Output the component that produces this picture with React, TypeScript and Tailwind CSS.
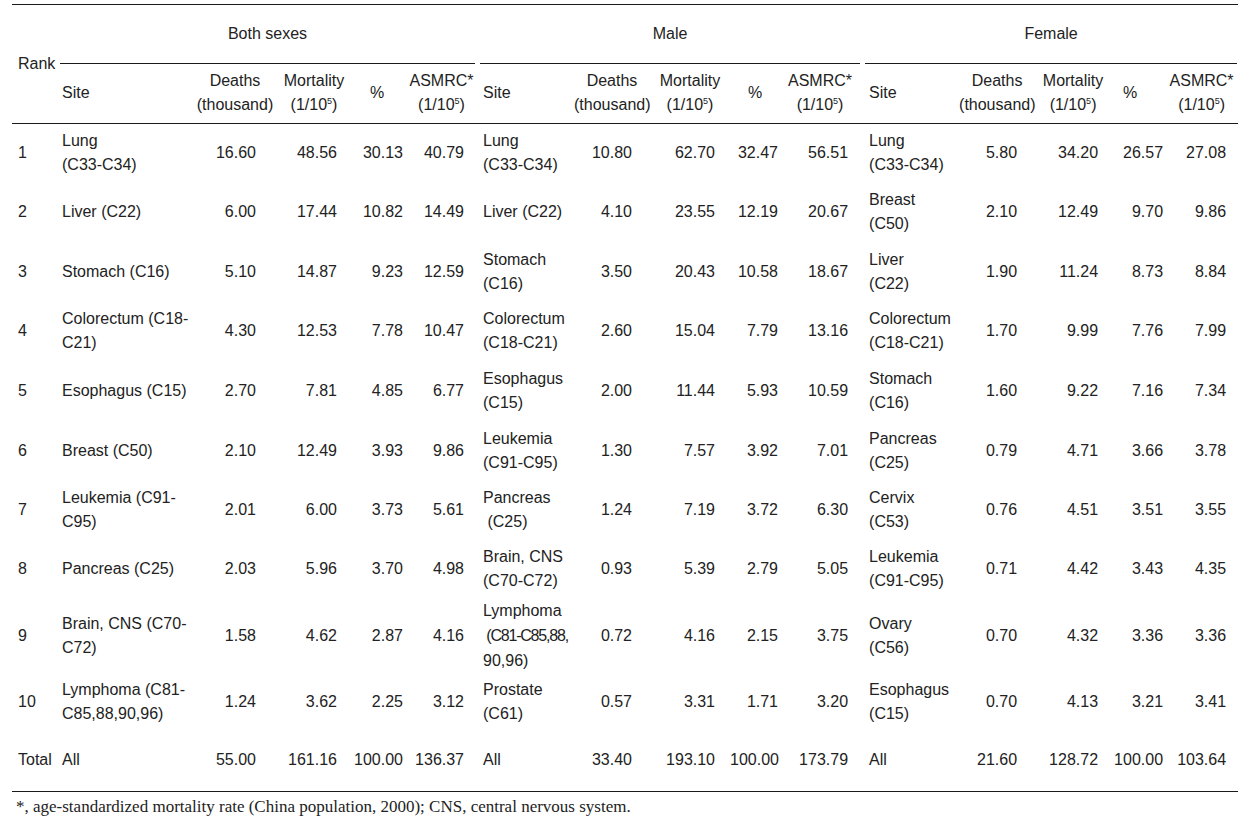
import React from 'react'

// one site cell per sex, each listed line by line as it is typeset
interface Row {
  rank: string
  sites: string[][]
  values: string[][]
  h: string
}

const rows: Row[] = [
  {
    rank: '1',
    sites: [['Lung', '(C33-C34)'], ['Lung', '(C33-C34)'], ['Lung', '(C33-C34)']],
    values: [
      ['16.60', '48.56', '30.13', '40.79'],
      ['10.80', '62.70', '32.47', '56.51'],
      ['5.80', '34.20', '26.57', '27.08'],
    ],
    h: 'h-[59px]',
  },
  {
    rank: '2',
    sites: [['Liver (C22)'], ['Liver (C22)'], ['Breast', '(C50)']],
    values: [
      ['6.00', '17.44', '10.82', '14.49'],
      ['4.10', '23.55', '12.19', '20.67'],
      ['2.10', '12.49', '9.70', '9.86'],
    ],
    h: 'h-[60px]',
  },
  {
    rank: '3',
    sites: [['Stomach (C16)'], ['Stomach', '(C16)'], ['Liver', '(C22)']],
    values: [
      ['5.10', '14.87', '9.23', '12.59'],
      ['3.50', '20.43', '10.58', '18.67'],
      ['1.90', '11.24', '8.73', '8.84'],
    ],
    h: 'h-[59px]',
  },
  {
    rank: '4',
    sites: [['Colorectum (C18-', 'C21)'], ['Colorectum', '(C18-C21)'], ['Colorectum', '(C18-C21)']],
    values: [
      ['4.30', '12.53', '7.78', '10.47'],
      ['2.60', '15.04', '7.79', '13.16'],
      ['1.70', '9.99', '7.76', '7.99'],
    ],
    h: 'h-[60px]',
  },
  {
    rank: '5',
    sites: [['Esophagus (C15)'], ['Esophagus', '(C15)'], ['Stomach', '(C16)']],
    values: [
      ['2.70', '7.81', '4.85', '6.77'],
      ['2.00', '11.44', '5.93', '10.59'],
      ['1.60', '9.22', '7.16', '7.34'],
    ],
    h: 'h-[60px]',
  },
  {
    rank: '6',
    sites: [['Breast (C50)'], ['Leukemia', '(C91-C95)'], ['Pancreas', '(C25)']],
    values: [
      ['2.10', '12.49', '3.93', '9.86'],
      ['1.30', '7.57', '3.92', '7.01'],
      ['0.79', '4.71', '3.66', '3.78'],
    ],
    h: 'h-[59px]',
  },
  {
    rank: '7',
    sites: [['Leukemia (C91-', 'C95)'], ['Pancreas', '\u00a0(C25)'], ['Cervix', '(C53)']],
    values: [
      ['2.01', '6.00', '3.73', '5.61'],
      ['1.24', '7.19', '3.72', '6.30'],
      ['0.76', '4.51', '3.51', '3.55'],
    ],
    h: 'h-[60px]',
  },
  {
    rank: '8',
    sites: [['Pancreas (C25)'], ['Brain, CNS', '(C70-C72)'], ['Leukemia', '(C91-C95)']],
    values: [
      ['2.03', '5.96', '3.70', '4.98'],
      ['0.93', '5.39', '2.79', '5.05'],
      ['0.71', '4.42', '3.43', '4.35'],
    ],
    h: 'h-[58px]',
  },
  {
    rank: '9',
    sites: [['Brain, CNS (C70-', 'C72)'], ['Lymphoma', '\u00a0(C81-C85,88,', '90,96)'], ['Ovary', '(C56)']],
    values: [
      ['1.58', '4.62', '2.87', '4.16'],
      ['0.72', '4.16', '2.15', '3.75'],
      ['0.70', '4.32', '3.36', '3.36'],
    ],
    h: 'h-[75px]',
  },
  {
    rank: '10',
    sites: [['Lymphoma (C81-', 'C85,88,90,96)'], ['Prostate', '(C61)'], ['Esophagus', '(C15)']],
    values: [
      ['1.24', '3.62', '2.25', '3.12'],
      ['0.57', '3.31', '1.71', '3.20'],
      ['0.70', '4.13', '3.21', '3.41'],
    ],
    h: 'h-[57px]',
  },
  {
    rank: 'Total',
    sites: [['All'], ['All'], ['All']],
    values: [
      ['55.00', '161.16', '100.00', '136.37'],
      ['33.40', '193.10', '100.00', '173.79'],
      ['21.60', '128.72', '100.00', '103.64'],
    ],
    h: 'h-[61px]',
  },
]

interface Group {
  title: string
  line: string
  siteW: string
  sitePl: string
  cols: { w: string; pr: string; head: string }[]
}

const groups: Group[] = [
  {
    title: 'Both sexes',
    line: 'ml-[3px] mr-[2px]',
    siteW: 'w-[133px]',
    sitePl: 'pl-[5px]',
    cols: [
      { w: 'w-[90px]', pr: 'pr-[24px]', head: '' },
      { w: 'w-[68px]', pr: 'pr-[11px]', head: '' },
      { w: 'w-[58px]', pr: 'pr-[3px]', head: '' },
      { w: 'w-[71px]', pr: 'pr-[13px]', head: '' },
    ],
  },
  {
    title: 'Male',
    line: 'ml-[3px]',
    siteW: 'w-[97px]',
    sitePl: 'pl-[6px]',
    cols: [
      { w: 'w-[76px]', pr: 'pr-[18px]', head: '' },
      { w: 'w-[80px]', pr: 'pr-[15px]', head: '' },
      { w: 'w-[50px]', pr: 'pr-[2px]', head: '' },
      { w: 'w-[80px]', pr: 'pr-[12px]', head: '' },
    ],
  },
  {
    title: 'Female',
    line: 'ml-[5px] mr-[1px]',
    siteW: 'w-[99px]',
    sitePl: 'pl-[9px]',
    cols: [
      { w: 'w-[76px]', pr: 'pr-[18px]', head: '' },
      { w: 'w-[76px]', pr: 'pr-[13px]', head: '' },
      { w: 'w-[54px]', pr: 'pr-[2px]', head: 'pr-[16px]' },
      { w: 'w-[73px]', pr: 'pr-[12px]', head: '' },
    ],
  },
]

const Per100k = () => (
  <>
    (1/10<sup className="text-[9px] -top-[0.75em]">5</sup>)
  </>
)

const heads: React.ReactNode[] = [
  <>
    Deaths
    <br />
    (thousand)
  </>,
  <>
    Mortality
    <br />
    <Per100k />
  </>,
  <>%</>,
  <>
    ASMRC*
    <br />
    <Per100k />
  </>,
]

const App: React.FC = () => {
  return (
    <div className="w-[1254px] h-[829px] bg-white text-[#222] font-['Liberation_Sans',Arial,sans-serif] text-[16px] pt-[4px] pl-[12px] overflow-hidden">
      <table className="table-fixed border-collapse w-[1226px] border-t border-b border-[#1a1a1a]">
        <colgroup>
          <col className="w-[45px]" />
          {groups.map((g) => (
            <React.Fragment key={g.title}>
              <col className={g.siteW} />
              {g.cols.map((c, i) => (
                <col key={i} className={c.w} />
              ))}
            </React.Fragment>
          ))}
        </colgroup>
        <thead>
          <tr className="h-[59px]">
            <td rowSpan={2} className="p-0 pl-[6px] align-middle border-b border-[#1a1a1a]">
              Rank
            </td>
            {groups.map((g) => (
              <td key={g.title} colSpan={5} className="p-0 align-bottom">
                <div className={`h-[59px] flex items-center justify-center border-b border-[#1a1a1a] ${g.line}`}>
                  {g.title}
                </div>
              </td>
            ))}
          </tr>
          <tr className="h-[59px] border-b border-[#1a1a1a] leading-[24px]">
            {groups.map((g) => (
              <React.Fragment key={g.title}>
                <td className={`p-0 align-middle ${g.sitePl}`}>Site</td>
                {g.cols.map((c, i) => (
                  <td key={i} className={`p-0 align-middle text-center whitespace-nowrap ${c.head}`}>
                    {heads[i]}
                  </td>
                ))}
              </React.Fragment>
            ))}
          </tr>
        </thead>
        <tbody>
          {rows.map((r) => (
            <tr key={r.rank} className={r.h}>
              <td className="p-0 pl-[6px] align-middle whitespace-nowrap">{r.rank}</td>
              {groups.map((g, gi) => (
                <React.Fragment key={g.title}>
                  <td
                    className={`p-0 align-middle whitespace-nowrap ${
                      gi === 1 && r.rank === '9' ? 'leading-[25px]' : 'leading-[24px]'
                    } ${g.sitePl}`}
                  >
                    {r.sites[gi].map((line, li) => (
                      <div
                        key={li}
                        className={gi === 1 && r.rank === '9' && li === 1 ? 'tracking-[-1.2px]' : ''}
                      >
                        {line}
                      </div>
                    ))}
                  </td>
                  {g.cols.map((c, ci) => (
                    <td key={ci} className={`p-0 align-middle text-right whitespace-nowrap ${c.pr}`}>
                      {r.values[gi][ci]}
                    </td>
                  ))}
                </React.Fragment>
              ))}
            </tr>
          ))}
        </tbody>
      </table>
      <p className="mt-[5px] pl-[4px] font-['Liberation_Serif','Times_New_Roman',serif] text-[17px] leading-[20px] text-[#222]">
        *, age-standardized mortality rate (China population, 2000); CNS, central nervous system.
      </p>
    </div>
  )
}

export default App
